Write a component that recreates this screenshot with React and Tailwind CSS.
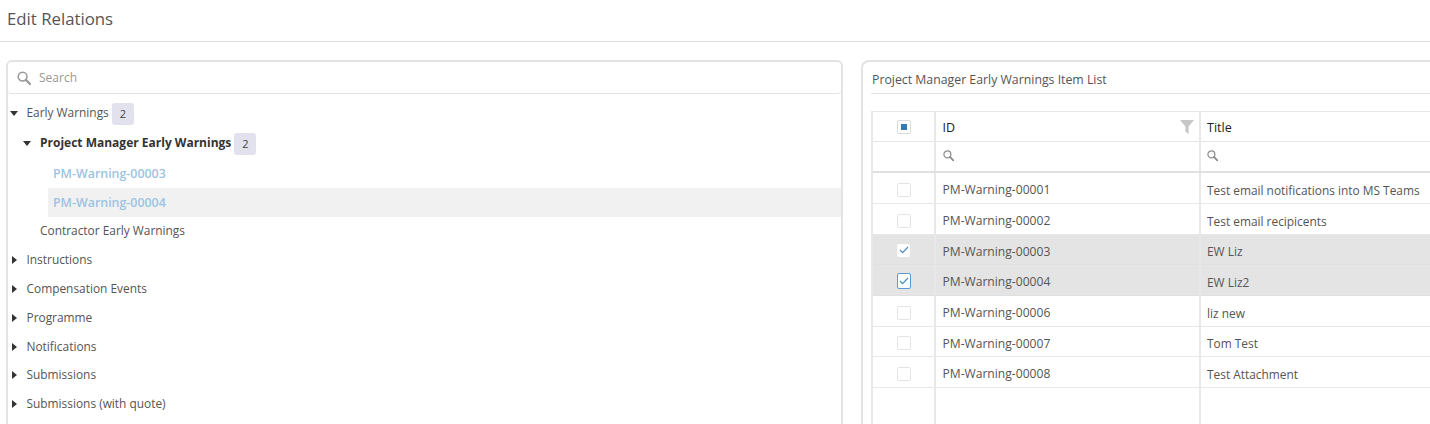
import React from "react";

const font = "font-['Open_Sans','Noto_Sans',sans-serif]";

function Down() {
  return (
    <svg width="8" height="5" viewBox="0 0 8 5" className="block">
      <path d="M0 0h8L4 5z" fill="#333" />
    </svg>
  );
}
function Right() {
  return (
    <svg width="5" height="8" viewBox="0 0 5 8" className="block">
      <path d="M0 0l5 4L0 8z" fill="#333" />
    </svg>
  );
}
function Glass({ size, color, className = "" }) {
  return (
    <svg width={size} height={size} viewBox="0 0 12 12" className={`block ${className}`}>
      <circle cx="4.8" cy="4.8" r="3.8" fill="none" stroke={color} strokeWidth="1.3" />
      <path d="M7.6 7.6L11.2 11.2" stroke={color} strokeWidth="1.9" strokeLinecap="round" />
    </svg>
  );
}
function Badge({ children }) {
  return (
    <span className="ml-[3px] mt-[2px] flex h-[22px] w-[22px] items-center justify-center rounded-[3px] bg-[#e2e2ef] text-[11px] text-[#444]">
      {children}
    </span>
  );
}

function Collapsed({ label, h = "h-[29px]" }) {
  return (
    <div className={`flex ${h} items-center text-[11.9px] text-[#555]`}>
      <span className="ml-[4px] flex w-[14.5px] justify-start">
        <Right />
      </span>
      <span>{label}</span>
    </div>
  );
}

const tick = (
  <svg width="10" height="8" viewBox="0 0 10 8">
    <path d="M1 4l2.6 2.6L9 1" fill="none" stroke="#4a8ac7" strokeWidth="1.2" />
  </svg>
);

function Check({ state }) {
  if (state === "partial")
    return (
      <span className="mb-[3px] flex h-[14px] w-[14px] items-center justify-center rounded-[2px] border border-[#dcdcdc] bg-white">
        <span className="h-[6px] w-[6px] bg-[#337ab7]" />
      </span>
    );
  if (state === "checked")
    return (
      <span className="mb-[4px] flex h-[13px] w-[13px] items-center justify-center rounded-[2px] bg-white">
        {tick}
      </span>
    );
  if (state === "focus")
    return (
      <span className="mb-[3px] flex h-[16px] w-[14px] items-center justify-center rounded-[2px] border border-[#5b9bd5] bg-white">
        {tick}
      </span>
    );
  return <span className="mb-[2px] block h-[14px] w-[14px] rounded-[2px] border border-[#e4e4e4] bg-white" />;
}

const rows = [
  ["PM-Warning-00001", "Test email notifications into MS Teams", "", "h-[31px]"],
  ["PM-Warning-00002", "Test email recipicents", "", "h-[31px]"],
  ["PM-Warning-00003", "EW Liz", "checked", "h-[30px]"],
  ["PM-Warning-00004", "EW Liz2", "focus", "h-[31px]"],
  ["PM-Warning-00006", "liz new", "", "h-[31px]"],
  ["PM-Warning-00007", "Tom Test", "", "h-[30px]"],
  ["PM-Warning-00008", "Test Attachment", "", "h-[31px]"],
];

function Cells({ a, b, c, className = "", pad = "" }) {
  return (
    <div className={`flex ${className}`}>
      <div className={`flex w-[63px] shrink-0 items-center justify-center border-r-2 border-[#e8e8e8] ${pad}`}>{a}</div>
      <div className={`relative flex w-[265px] shrink-0 items-center border-r-2 border-[#e8e8e8] pl-[6.5px] ${pad}`}>{b}</div>
      <div className={`flex flex-1 items-center whitespace-nowrap pl-[6px] ${pad}`}>{c}</div>
    </div>
  );
}

export default function App() {
  return (
    <div className={`${font} h-[424px] w-[1430px] overflow-hidden bg-white`}>
      <div className="flex h-[42px] items-center border-b border-[#e0e0e0] pb-[3px] pl-[7px] text-[16.8px] text-[#555]">
        Edit Relations
      </div>
      <div className="flex pt-[18px]">
        <div className="ml-[6px] h-[400px] w-[837px] shrink-0 rounded-t-[6px] border-2 border-b-0 border-[#e3e3e3]">
          <div className="flex h-[32px] items-center rounded-b-[4px] border-b border-[#e3e3e3] pl-[9px] text-[12px] text-[#999]">
            <Glass size={14} color="#999" />
            <span className="ml-[8px]">Search</span>
          </div>
          <div className="pt-[4px]">
            <div className="flex h-[30px] items-center text-[11.9px] text-[#555]">
              <span className="flex w-[18.5px] pl-[2px]"><Down /></span>
              <span>Early Warnings</span>
              <Badge>2</Badge>
            </div>
            <div className="mb-[1px] flex h-[30px] items-center text-[12px] font-bold text-[#333]">
              <span className="flex w-[32px] pl-[15px]"><Down /></span>
              <span>Project Manager Early Warnings</span>
              <span className="font-normal"><Badge>2</Badge></span>
            </div>
            <div className="flex h-[29px] items-center pl-[45px] pt-[1px] text-[12.4px] font-semibold text-[#9dc3e2]">PM-Warning-00003</div>
            <div className="ml-[40px] flex h-[29px] items-center bg-[#f1f1f1] pl-[5px] pt-[1px] text-[12.4px] font-semibold text-[#9dc3e2]">PM-Warning-00004</div>
            <div className="flex h-[28px] items-center pl-[32px] text-[11.9px] text-[#555]">Contractor Early Warnings</div>
            <Collapsed label="Instructions" />
            <Collapsed label="Compensation Events" />
            <Collapsed label="Programme" />
            <Collapsed label="Notifications" h="h-[29px]" />
            <Collapsed label="Submissions" h="h-[28px]" />
            <Collapsed label="Submissions (with quote)" />
          </div>
        </div>
        <div className="ml-[18px] h-[400px] flex-1 rounded-tl-[8px] border-2 border-r-0 border-b-0 border-[#e3e3e3] pl-[8px]">
          <div className="flex h-[32px] items-center border-b border-[#e3e3e3] pl-[1px] pt-[5px] text-[12.3px] font-medium text-[#555]">
            Project Manager Early Warnings Item List
          </div>
          <div className="mt-[17px] border-l-2 border-[#e8e8e8] text-[12px] text-[#555]">
            <Cells
              className="h-[31px] border-y border-[#e8e8e8] text-[12.5px] font-medium text-[#222]"
              pad="pt-[3px]"
              a={<Check state="partial" />}
              b={
                <>
                  ID
                  <svg width="14" height="14" viewBox="0 0 14 14" className="absolute right-[5px] top-[8px]">
                    <path d="M0 0h14L8.6 6.5V14L5.4 11.5V6.5z" fill="#c6c6c6" />
                  </svg>
                </>
              }
              c="Title"
            />
            <Cells
              className="h-[31px] border-b-2 border-[#e0e0e0]"
              b={<Glass size={11} color="#8a8a8a" className="mb-[2px]" />}
              c={<Glass size={11} color="#8a8a8a" className="mb-[2px]" />}
            />
            {rows.map(([id, title, st, h]) => (
              <Cells
                key={id}
                className={`${h} border-b ${st ? "border-[#e0e0e0] bg-[#e4e4e4]" : "border-[#e8e8e8]"}`}
                pad="pt-[5px]"
                a={<Check state={st} />}
                b={<span className="text-[12.1px]">{id}</span>}
                c={<span className="text-[11.9px]">{title}</span>}
              />
            ))}
            <Cells className="h-[40px]" />
          </div>
        </div>
      </div>
    </div>
  );
}
